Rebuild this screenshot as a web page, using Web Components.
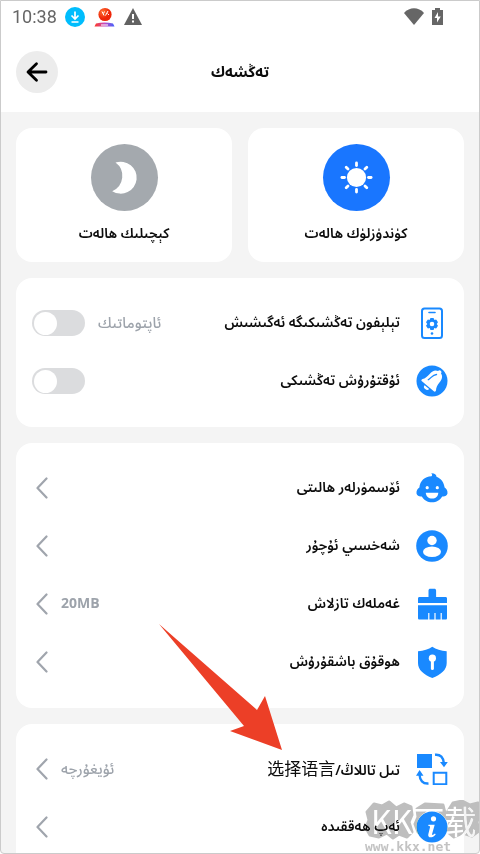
<!DOCTYPE html>
<html lang="ug" dir="rtl">
<head>
<meta charset="utf-8">
<meta name="viewport" content="width=device-width, initial-scale=1">
<title>تەڭشەك</title>
<style>
  html, body { margin: 0; height: 100%; }
  body {
    font-family: "Noto Sans Arabic", "Open Sans", "Noto Sans CJK SC", sans-serif;
    color: #0c0c0c;
    --blue: #1989ff;
    --muted: #9da3ab;
    --page: #f4f4f4;
  }
  .han { font: 400 17px/24px "Noto Sans CJK SC", sans-serif; }
  .size { font-size: 14px; }
</style>
</head>
<body>
<settings-screen>
  <status-bar slot="status">10:38</status-bar>
  <top-bar slot="header">تەڭشەك</top-bar>
  <mode-grid>
    <mode-card icon="sun" active>كۈندۈزلۈك ھالەت</mode-card>
    <mode-card icon="moon">كېچىلىك ھالەت</mode-card>
  </mode-grid>
  <settings-group>
    <switch-row icon="phone">تېلېفون تەڭشىكىگە ئەگىشىش<span slot="value">ئاپتوماتىك</span></switch-row>
    <switch-row icon="bell">ئۇقتۇرۇش تەڭشىكى</switch-row>
  </settings-group>
  <settings-group>
    <nav-row icon="child">ئۆسمۈرلەر ھالىتى</nav-row>
    <nav-row icon="user">شەخسىي ئۇچۇر</nav-row>
    <nav-row icon="brush">غەملەك تازلاش<b class="size" slot="value">20MB</b></nav-row>
    <nav-row icon="shield">ھوقۇق باشقۇرۇش</nav-row>
  </settings-group>
  <settings-group>
    <nav-row icon="swap">تىل تاللاڭ/<span class="han" lang="zh-CN">选择语言</span><span slot="value">ئۇيغۇرچە</span></nav-row>
    <nav-row icon="info">ئەپ ھەققىدە</nav-row>
  </settings-group>
  <pointer-arrow slot="overlay"></pointer-arrow>
  <site-mark slot="overlay"><span slot="name">KK下载</span>www.kkx.net</site-mark>
</settings-screen>

<script>
const svg = (w, h, body) => `<svg width="${w}" height="${h}" viewBox="0 0 ${w} ${h}" fill="none" aria-hidden="true">${body}</svg>`;

const rays = Array.from({ length: 8 }, (_, i) =>
  `<path d="M33.5 18.9v2.6" transform="rotate(${i * 45} 33.5 33.5)" stroke="#fff" stroke-width="2.8" stroke-linecap="round"/>`).join('');
const teeth = Array.from({ length: 6 }, (_, i) =>
  `<rect x="14" y="11" width="4" height="3" rx="1" transform="rotate(${i * 60} 16 17)" fill="#1989ff"/>`).join('');

const ICONS = {
  sun: svg(67, 67, `<circle cx="33.5" cy="33.5" r="9.6" fill="#fff"/>${rays}`),
  moon: svg(67, 67, `<path d="M24.5 18.5A16 16 0 1 1 21.200 47.200A16.600 16.600 0 0 0 24.500 18.500Z" fill="#fff"/>`),
  phone: svg(32, 32, `<rect x="6" y="1.500" width="20" height="29.500" rx="2.500" stroke="#1989ff" stroke-width="2"/><path d="M13 5.500h6" stroke="#1989ff" stroke-width="1.600" stroke-linecap="round"/><circle cx="16" cy="17" r="3.600" stroke="#1989ff" stroke-width="2.600"/>${teeth}<circle cx="16" cy="26.500" r="1.300" fill="#1989ff"/>`),
  bell: svg(32, 32, `<circle cx="16" cy="16" r="15.500" fill="#1989ff"/><g transform="rotate(40 16 16)" fill="#fff"><path d="M14.300 4.500a1.900 1.900 0 0 1 3.800 0c3.200.8 4.600 3.700 4.600 7.600 0 3.600.8 6.400 2.300 8.400.8 1.100.2 2.200-1 2.200H8.500c-1.200 0-1.800-1.100-1-2.200 1.500-2 2.200-4.800 2.200-8.400 0-3.900 1.400-6.800 4.600-7.600Z"/><path d="M13 24h6a3 2.600 0 0 1-6 0Z"/><path d="M12.300 17.500c1.100-2.900.1-6.700 3-9.400" stroke="#1989ff" stroke-width="1.300" stroke-linecap="round" fill="none"/></g>`),
  child: svg(32, 32, `<path d="M15.500 4.200C16.500 3.500 16.300 2.300 15.200 1.300C18.700 1.200 20.300 2.500 20.500 4.700C25 6.300 28 10.300 28.600 15.500C30.300 16.500 31.800 18.500 31.500 21.500C31 23.800 28.500 24.800 26.200 24.400C24 28 20.400 30.300 16 30.300S8 28 5.800 24.400C3.500 24.800 1 23.800.5 21.500C.2 18.500 1.700 16.500 3.400 15.500C4 9 8.500 4.400 15.500 4.200Z" fill="#1989ff"/><circle cx="11.200" cy="15.700" r="1.600" fill="#fff"/><circle cx="21.300" cy="15.700" r="1.600" fill="#fff"/><path d="M9.800 20.700h12.500c-.2 3.600-2.700 5.800-6.200 5.800s-6.100-2.200-6.300-5.800Z" fill="#fff"/>`),
  user: svg(32, 32, `<circle cx="16" cy="16" r="15.800" fill="#1989ff"/><circle cx="16" cy="10.500" r="4.700" fill="#fff"/><ellipse cx="16" cy="21.800" rx="9" ry="5.300" fill="#fff"/>`),
  brush: svg(32, 32, `<path d="M12.500 9V2.500C12.500 1.300 13.300.7 14.300.7h4c1 0 1.800.6 1.800 1.800V9H29.500c1 0 1.500.6 1.500 1.500V15H2v-4.500C2 9.600 2.500 9 3.500 9ZM2 17.200h29V30c0 1-.5 1.500-1.500 1.500h-3.700V25h-1.200v6.500h-5V25h-1.200v6.500h-5V25h-1.200v6.500h-5V25H8v6.500H3.500C2.500 31.500 2 31 2 30Z" fill="#1989ff"/>`),
  shield: svg(32, 32, `<path d="M16.300.8C20 3.300 25 4.800 30.700 5.300V17c0 7-5.700 11.500-14.400 15C7.700 28.500 2 24 2 17V5.300C7.700 4.800 12.600 3.300 16.300.8Z" fill="#1989ff"/><circle cx="16.400" cy="12.200" r="3.600" fill="#fff"/><path d="M16.400 13v9.500" stroke="#fff" stroke-width="3" stroke-linecap="round"/>`),
  swap: svg(32, 32, `<path d="M1 1h15v14H1Z" fill="#1989ff"/><path d="M17.700 19.700h12.600v11.600H17.700Z" stroke="#1989ff" stroke-width="2"/><path d="M19 1.800c5.500-.6 8.500 2.700 9 9M12.500 30.500c-5.800.5-8.700-3.300-9-9" stroke="#1989ff" stroke-width="2.400"/><path d="M24 9h7.800L28 14.300ZM0 22.800h7.500L3.600 17Z" fill="#1989ff"/>`),
  info: svg(32, 32, `<circle cx="16" cy="16" r="15.500" fill="#1989ff"/><circle cx="17.500" cy="7.800" r="2.600" fill="#fff"/><path d="M12.500 13.700h6.200l-2.600 9.300c-.3 1.200.8 1.400 2.900-.4l.7.900c-3 3.700-8.300 4-7.400-.2l1.700-7c.2-1-.3-1.300-1.700-1.400Z" fill="#fff"/>`),
  chevron: svg(12, 22, `<path d="M10.500 1.500L1.500 11l9 9.500" stroke="#a0a5ad" stroke-width="2.200" stroke-linecap="round" stroke-linejoin="round"/>`),
  back: svg(42, 42, `<path d="M30 21H12.500M20.500 12.800L12 21l8.500 8.300" stroke="#000" stroke-width="2.800" stroke-linecap="round" stroke-linejoin="round"/>`)
};

const define = (name, render) => customElements.define(name, class extends HTMLElement {
  connectedCallback() {
    if (!this.shadowRoot) this.attachShadow({ mode: 'open' }).innerHTML = render(this);
  }
});

define('settings-screen', () => `
  <style>
    :host { display: flex; flex-direction: column; position: relative; height: 100vh; box-sizing: border-box;
      overflow: hidden; border: 1px solid #cbcbcb; border-radius: 0 0 4px 4px; background: var(--page); }
    main { display: flex; flex-direction: column; gap: 16px; padding: 16px 15px; }
  </style>
  <slot name="status"></slot>
  <slot name="header"></slot>
  <main><slot></slot></main>
  <slot name="overlay"></slot>`);

define('status-bar', () => `
  <style>
    :host { display: flex; direction: ltr; align-items: center; justify-content: space-between; flex: none;
      height: 31px; padding: 0 36px 0 11px; background: #fff; color: #666; font: 18px/30px Roboto, sans-serif; }
    div { display: flex; align-items: center; gap: 8px; }
    svg { display: block; }
  </style>
  <div><time><slot></slot></time>
    ${svg(20, 20, `<circle cx="10" cy="10" r="10" fill="#00bdfd"/><path d="M10 4.500v7M6.500 8.500l3.500 3.500 3.500-3.500M6.500 15h7" stroke="#fff" stroke-width="1.700"/>`)}
    ${svg(22, 20, `<defs><linearGradient id="g"><stop stop-color="#ff3a20"/><stop offset=".5" stop-color="#c64bc0"/><stop offset="1" stop-color="#3d62ff"/></linearGradient><radialGradient id="r" cx=".35" cy=".3"><stop stop-color="#ff7130"/><stop offset="1" stop-color="#ee2608"/></radialGradient></defs><circle cx="12" cy="7.500" r="6.600" fill="url(#r)"/><path d="M9 4.500l2 4M11.500 4.500l-1 2M12.500 8.500l2.500-4.500M14.500 6.500l1.500 1.500" stroke="#fff" stroke-width="1"/><path d="M3 16.500Q11.500 14.500 20 16.500L21.500 19.500H1.500Z" fill="url(#g)"/><path d="M8 18h7" stroke="#fff" stroke-width="1"/>`)}
    ${svg(20, 18, `<path d="M10 0L19 17H1Z" fill="#626262"/><path d="M10 6v5M10 12.500v2" stroke="#fff" stroke-width="2"/>`)}
  </div>
  <div>
    ${svg(20, 17, `<path d="M0 5C5.500-1.200 14.500-1.200 20 5L10 17Z" fill="#666"/>`)}
    ${svg(11, 17, `<path d="M3 0h5v2h3v15H0V2h3Z" fill="#666"/><path d="M6 4v4.500h2.800L5 14.500V10H2.500Z" fill="#fff"/>`)}
  </div>`);

define('top-bar', () => `
  <style>
    :host { display: grid; grid-template-columns: 42px 1fr 42px; align-items: center; flex: none;
      height: 80px; padding: 0 15px; background: #fff; }
    h1 { grid-column: 2; margin: 0; text-align: center; font-size: 15px; line-height: 24px; font-weight: 700; }
    button { width: 42px; height: 42px; padding: 0; border: 0; border-radius: 50%; background: #ececec; }
    svg { display: block; }
  </style>
  <h1><slot></slot></h1>
  <button type="button" aria-label="قايتىش">${ICONS.back}</button>`);

define('mode-grid', () => `
  <style>:host { display: grid; grid-template-columns: 1fr 1fr; gap: 16px; }</style>
  <slot></slot>`);

define('mode-card', el => `
  <style>
    :host { display: grid; --disc: #a4a9ae; }
    :host([active]) { --disc: #1976ff; }
    button { display: flex; flex-direction: column; align-items: center; gap: 11px; padding: 16px; border: 0;
      border-radius: 16px; background: #fff; color: inherit; font: inherit; font-size: 14px; font-weight: 600; line-height: 24px; }
    i { display: block; border-radius: 50%; background: var(--disc); }
    svg { display: block; }
  </style>
  <button type="button" aria-pressed="${el.hasAttribute('active')}"><i>${ICONS[el.getAttribute('icon')]}</i><span><slot></slot></span></button>`);

define('settings-group', () => `
  <style>:host { display: block; padding: 16px 16px 17px; border-radius: 16px; background: #fff; }</style>
  <slot></slot>`);

const rowStyle = `
    :host { display: block; }
    .row { display: flex; align-items: center; gap: 16px; width: 100%; height: 58px; padding: 0; border: 0;
      background: none; color: inherit; font: inherit; font-size: 14px; line-height: 24px; text-align: start; }
    .label { flex: 1; font-weight: 600; white-space: nowrap; }
    .end { display: flex; align-items: center; gap: 13px; color: var(--muted); font-size: 15px; font-weight: 500; }
    svg { display: block; flex: none; }`;

define('nav-row', el => `
  <style>${rowStyle} .end { padding-inline-end: 4px; }</style>
  <button type="button" class="row">${ICONS[el.getAttribute('icon')]}<span class="label"><slot></slot></span>
    <span class="end"><slot name="value"></slot>${ICONS.chevron}</span></button>`);

define('switch-row', el => `
  <style>${rowStyle}
    input { appearance: none; width: 53px; height: 26px; margin: 0; border-radius: 13px; background: #dbdcde;
      display: flex; direction: ltr; align-items: center; padding: 2px; box-sizing: border-box; }
    input::before { content: ""; width: 23px; height: 23px; border-radius: 50%; background: #fff; }
    input:checked { background: var(--blue); justify-content: flex-end; }
  </style>
  <label class="row">${ICONS[el.getAttribute('icon')]}<span class="label"><slot></slot></span>
    <span class="end"><slot name="value"></slot><input type="checkbox" role="switch"></span></label>`);

define('pointer-arrow', () => `
  <style>:host { position: absolute; left: 158px; top: 622px; pointer-events: none; } svg { display: block; }</style>
  ${svg(124, 128, `<path d="M0 1L98 87L106 73L123 127L71 108L85 103Z" fill="#ec3f27"/>`)}`);

define('site-mark', () => `
  <style>
    :host { position: absolute; right: 0; bottom: 0; width: 114px; direction: ltr; pointer-events: none;
      mix-blend-mode: darken; color: #c3c3c3; font: 700 13px/13px "DejaVu Sans Mono", monospace; }
    svg { position: absolute; left: 0; top: 0; }
    .name { position: relative; display: block; color: #fff; font: 32px/40px "Noto Sans CJK SC", sans-serif;
      white-space: nowrap; padding-left: 6px; }
  </style>
  ${svg(115, 40, `<path d="M2 12L9 4L17 6L24 2L31 8L39 4L46 7L47 15L44 22L47 32L42 37L34 34L28 38L22 33L14 37L5 35L1 28L4 20ZM52 9L60 4L78 5L80 13L77 21L79 31L74 37L60 36L53 32L50 24L53 17ZM83 11L88 3L97 1L105 5L113 3L115 13L112 22L114 31L107 36L98 33L89 37L83 32L85 22L81 17Z" stroke-linejoin="round" stroke="#bebebe" stroke-width="3" fill="#bebebe"/><circle cx="67" cy="26" r="15" fill="#fff"/>`)}
  <span class="name"><slot name="name"></slot></span><slot></slot>`);
</script>
</body>
</html>
